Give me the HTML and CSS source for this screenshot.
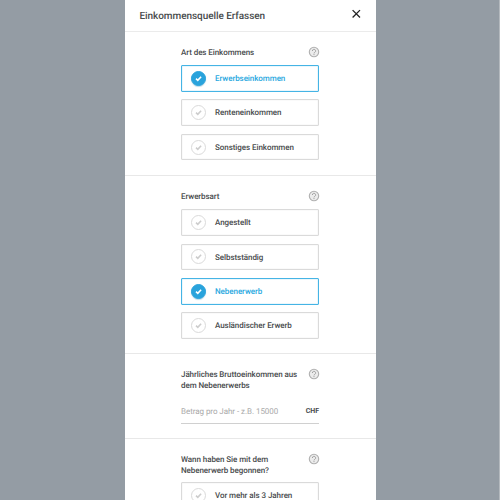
FILE: index.html
```
<!DOCTYPE html>
<html lang="de">
<head>
<meta charset="utf-8">
<title>Einkommensquelle Erfassen</title>
<link rel="stylesheet" href="styles.css">
</head>
<body>
<svg width="0" height="0" class="defs">
  <symbol id="check" viewBox="0 0 13 13"><path d="M4 6.6 5.8 8.3 9.1 4.8" fill="none" stroke="currentColor" stroke-width="1.6"/></symbol>
  <symbol id="help" viewBox="0 0 12 12"><circle cx="6" cy="6" r="4.7" fill="#ececec" stroke="#b0b0b0" stroke-width="1.1"/><path d="M4.4 5a1.6 1.6 0 1 1 2.4 1.3Q6 6.7 6 7.4M6 8.1v1" fill="none" stroke="#a0a0a0" stroke-width="1"/></symbol>
</svg>
<main class="modal">
  <header class="header">
    <h1 class="title">Einkommensquelle Erfassen</h1>
    <svg class="close" viewBox="0 0 10 10"><path d="M1.6 1.1 9 8.5M9 1.1 1.6 8.5" stroke="#222" stroke-width="1.3"/></svg>
  </header>
  <section class="section income">
    <div class="question"><h2 class="label">Art des Einkommens</h2><svg class="help"><use href="#help"/></svg></div>
    <div class="options">
      <div class="option selected"><svg class="tick"><use href="#check"/></svg><span class="name">Erwerbseinkommen</span></div>
      <div class="option"><svg class="tick"><use href="#check"/></svg><span class="name">Renteneinkommen</span></div>
      <div class="option"><svg class="tick"><use href="#check"/></svg><span class="name">Sonstiges Einkommen</span></div>
    </div>
  </section>
  <section class="section work">
    <div class="question"><h2 class="label">Erwerbsart</h2><svg class="help"><use href="#help"/></svg></div>
    <div class="options">
      <div class="option"><svg class="tick"><use href="#check"/></svg><span class="name">Angestellt</span></div>
      <div class="option"><svg class="tick"><use href="#check"/></svg><span class="name">Selbstständig</span></div>
      <div class="option selected"><svg class="tick"><use href="#check"/></svg><span class="name">Nebenerwerb</span></div>
      <div class="option"><svg class="tick"><use href="#check"/></svg><span class="name">Ausländischer Erwerb</span></div>
    </div>
  </section>
  <section class="section amount">
    <div class="question"><h2 class="label">Jährliches Bruttoeinkommen aus<br>dem Nebenerwerbs</h2><svg class="help"><use href="#help"/></svg></div>
    <div class="field"><span class="placeholder">Betrag pro Jahr - z.B. 15000</span><span class="unit">CHF</span></div>
  </section>
  <section class="section since">
    <div class="question"><h2 class="label">Wann haben Sie mit dem<br>Nebenerwerb begonnen?</h2><svg class="help"><use href="#help"/></svg></div>
    <div class="options">
      <div class="option"><svg class="tick"><use href="#check"/></svg><span class="name">Vor mehr als 3 Jahren</span></div>
    </div>
  </section>
</main>
</body>
</html>
```
FILE: styles.css
```
* { box-sizing: border-box; }
body {
  margin: 0;
  height: 500px;
  overflow: hidden;
  background: #949ca4;
  border-right: 1px solid #b4b9be;
  font-family: Roboto, sans-serif;
  color: #484b4d;
  text-rendering: geometricPrecision;
}
.defs { display: none; }
.modal {
  width: 251px;
  height: 500px;
  margin-left: 125px;
  overflow: hidden;
  background: #fff;
}
.header {
  display: flex;
  justify-content: space-between;
  height: 32px;
  padding: 9px 14.7px 0 14.5px;
  border-bottom: 1px solid #ebebeb;
}
.title {
  margin: 0;
  font-size: 10px;
  line-height: 15px;
  font-weight: 500;
  letter-spacing: -.06px;
  white-space: nowrap;
}
.close { width: 10px; height: 10px; }
.section {
  padding: 14px 57px 0 56px;
  border-bottom: 1px solid #e8e8e8;
}
.income { height: 144px; }
.work { height: 178px; }
.amount { height: 85px; }
.since { height: 80px; }
.question {
  display: flex;
  justify-content: space-between;
  align-items: flex-start;
}
.label {
  margin: 0 0 -1px;
  padding-top: 2px;
  font-size: 8px;
  line-height: 10.8px;
  font-weight: 500;
  letter-spacing: -.07px;
  white-space: nowrap;
}
.help { flex: none; width: 12px; height: 12px; margin: .2px -1px 0 0; }
.options {
  display: flex;
  flex-direction: column;
  gap: 7.8px;
  margin-top: 6.8px;
}
.work .options { margin-top: 7px; }
.option {
  display: flex;
  align-items: center;
  flex: none;
  height: 26.6px;
  padding-left: 8.6px;
  border: 1px solid #dadada;
  border-radius: 1px;
  box-shadow: inset 0 0 1px #ccc;
  font-size: 8px;
  line-height: 10px;
  font-weight: 500;
  letter-spacing: -.06px;
  white-space: nowrap;
}
.name { padding-top: 1.6px; }
.tick {
  flex: none;
  width: 15px;
  height: 15px;
  margin-right: 9.4px;
  border: 1px solid #dadada;
  border-radius: 50%;
  color: #cdcdcd;
}
.selected {
  border-color: #45b4e5;
  box-shadow: inset 0 0 1px #38ade1;
  color: #29a8e0;
}
.selected .tick {
  border-color: #29a3dc;
  background: #29a3dc;
  box-shadow: 0 1px 1px #b9d9e8;
  color: #fff;
}
.field {
  display: flex;
  justify-content: space-between;
  align-items: center;
  height: 25px;
  margin-top: 8.6px;
  border-bottom: 1px solid #d0d0d0;
  font-size: 8px;
}
.placeholder { color: #a9a9a9; letter-spacing: -.05px; }
.unit { font-size: 7px; font-weight: 700; }
```
